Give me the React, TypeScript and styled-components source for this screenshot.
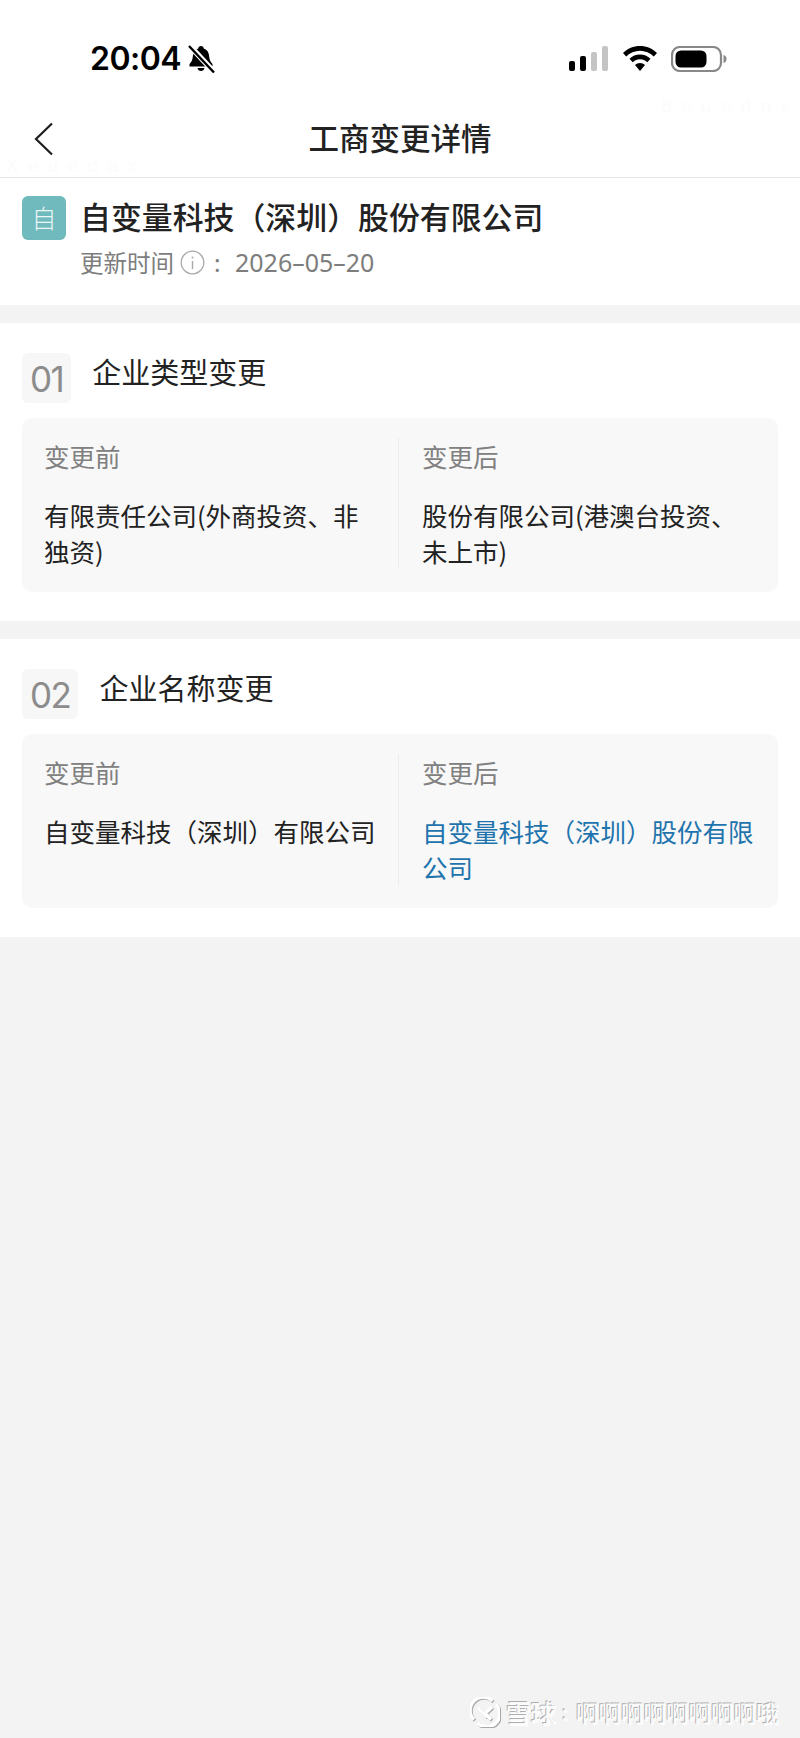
import styled, { createGlobalStyle } from "styled-components";

const GlobalStyle = createGlobalStyle`
    html, body {
        margin: 0;
        padding: 0;
        background: #f3f3f3;
    }
    * {
        box-sizing: border-box;
    }
`

const sections = [
    {
        no: "01",
        title: "企业类型变更",
        before: "有限责任公司(外商投资、非独资)",
        after: "股份有限公司(港澳台投资、未上市)",
    },
    {
        no: "02",
        title: "企业名称变更",
        before: "自变量科技（深圳）有限公司",
        after: "自变量科技（深圳）股份有限公司",
        changed: true,
    },
]

const App = () => {
    return (
        <Page>
            <GlobalStyle />
            <StatusBar>
                <TimeGroup>
                    <Time>20:04</Time>
                    <svg width="28" height="28" viewBox="0 0 28 28">
                        <path d="M14 1c1.600 0 2.600 1.100 2.800 2.400 3.400 1.100 5 4 5.300 7.400.3 3.700 1.100 6 3.400 8.200v2.500H2.500V19c2.300-2.200 3.100-4.500 3.400-8.200.3-3.400 1.900-6.300 5.300-7.400C11.400 2.100 12.400 1 14 1z" fill="#000" />
                        <path d="M10.500 23h7c-.3 1.800-1.700 3-3.500 3s-3.200-1.200-3.500-3z" fill="#000" />
                        <path d="M2 0 27 27" stroke="#fff" strokeWidth="5.500" />
                        <path d="M2 1 27 27.500" stroke="#000" strokeWidth="2.400" />
                    </svg>
                </TimeGroup>
                <StatusIcons>
                    <svg width="40" height="26" viewBox="0 0 40 26">
                        <rect x="0" y="15" width="6" height="10" rx="2" fill="#000" />
                        <rect x="11" y="10" width="6" height="15" rx="2" fill="#000" />
                        <rect x="22" y="6" width="6" height="19" rx="2" fill="#c4c4c4" />
                        <rect x="33" y="0" width="6" height="25" rx="2" fill="#c4c4c4" />
                    </svg>
                    <svg width="36" height="26" viewBox="0 0 36 26">
                        <path d="M18 0C11.500 0 5.500 2.600 1 7l3.200 3.500C8 6.900 12.800 4.800 18 4.800s10 2.100 13.800 5.700L35 7C30.500 2.600 24.500 0 18 0z" fill="#000" />
                        <path d="M18 8.500c-4 0-7.700 1.600-10.500 4.200l3.200 3.500c2-1.800 4.500-2.900 7.300-2.900s5.300 1.100 7.300 2.900l3.200-3.500C25.700 10.100 22 8.500 18 8.500z" fill="#000" />
                        <path d="M18 17c-1.900 0-3.700.7-5 2l5 6 5-6c-1.300-1.300-3.100-2-5-2z" fill="#000" />
                    </svg>
                    <svg width="56" height="26" viewBox="0 0 56 26">
                        <rect x="1" y="1" width="49" height="24" rx="8" fill="none" stroke="#888" strokeWidth="2.200" />
                        <rect x="4.500" y="4.500" width="31" height="17" rx="5.500" fill="#000" />
                        <path d="M52.500 9c2 .5 3 2 3 4s-1 3.500-3 4z" fill="#888" />
                    </svg>
                </StatusIcons>
            </StatusBar>

            <NavBar>
                <BackButton aria-label="返回">
                    <svg width="20" height="34" viewBox="0 0 20 34">
                        <path d="M18 1.500 2 17l16 15.500" fill="none" stroke="#1e1e1e" strokeWidth="2.200" />
                    </svg>
                </BackButton>
                <NavTitle>工商变更详情</NavTitle>
                <FaintMark $right>8 e u e d a x</FaintMark>
                <FaintMark>X e u e d a x</FaintMark>
            </NavBar>

            <CompanyPanel>
                <CompanyRow>
                    <CompanyLogo>自</CompanyLogo>
                    <CompanyName>自变量科技（深圳）股份有限公司</CompanyName>
                </CompanyRow>
                <UpdateRow>
                    更新时间
                    <svg width="25" height="25" viewBox="0 0 25 25">
                        <circle cx="12.500" cy="12.500" r="11.300" fill="none" stroke="#a8a8a8" strokeWidth="1.300" />
                        <circle cx="12.500" cy="7.500" r="1" fill="#a8a8a8" />
                        <path d="M12.500 11v8" stroke="#a8a8a8" strokeWidth="1.400" />
                    </svg>
                    <Colon>:</Colon>
                    <UpdateDate>2026–05–20</UpdateDate>
                </UpdateRow>
            </CompanyPanel>

            {sections.map((s) => (
                <Section key={s.no}>
                    <SectionHead>
                        <NumberBadge>{s.no}</NumberBadge>
                        <SectionTitle>{s.title}</SectionTitle>
                    </SectionHead>
                    <ChangeCard>
                        <ChangeCol>
                            <ColLabel>变更前</ColLabel>
                            <ColValue>{s.before}</ColValue>
                        </ChangeCol>
                        <ChangeCol $after>
                            <ColLabel>变更后</ColLabel>
                            <ColValue $changed={s.changed}>{s.after}</ColValue>
                        </ChangeCol>
                    </ChangeCard>
                </Section>
            ))}

            <Watermark>
                <LogoMark width="30" height="30" viewBox="0 0 30 30">
                    <g fill="none" stroke="#fff" strokeWidth="3.200">
                        <path d="M22.500 4A13 13 0 0 0 4 22.500" />
                        <path d="M7.500 26A13 13 0 0 0 26 7.500" />
                        <path d="M8 11l9 9" />
                        <path d="M22 10l-7 6.500 6 6" />
                    </g>
                </LogoMark>
                <BrandText>雪球</BrandText>
                <BrandColon>:</BrandColon>
                <AuthorText>啊啊啊啊啊啊啊啊哦</AuthorText>
            </Watermark>
        </Page>
    );
};

export default App

const cjk = `"Noto Sans CJK SC", "Noto Sans", sans-serif`

const Page = styled.div`
    position: relative;
    width: 800px;
    height: 1738px;
    overflow: hidden;
    background: #f3f3f3;
    font-family: ${cjk};
`

const StatusBar = styled.div`
    height: 87px;
    padding: 39px 73px 0 90px;
    background: #fff;
    display: flex;
    justify-content: space-between;
    align-items: flex-start;
`

const TimeGroup = styled.div`
    display: flex;
    align-items: center;
    gap: 6px;
`

const Time = styled.span`
    font-family: Inter, sans-serif;
    font-weight: 600;
    font-size: 32px;
    line-height: 40px;
    color: #000;
    letter-spacing: -0.5px;
`

const StatusIcons = styled.div`
    display: flex;
    align-items: center;
    gap: 13px;
    height: 40px;
`

const NavBar = styled.div`
    position: relative;
    height: 91px;
    background: #fff;
    border-bottom: 1px solid #e4e4e4;
    display: flex;
    align-items: center;
    justify-content: center;
`

const BackButton = styled.div`
    position: absolute;
    left: 34px;
    top: 35px;
    line-height: 0;
`

const NavTitle = styled.h1`
    margin: 10px 0 0;
    font-size: 30.500px;
    line-height: 40px;
    font-weight: 500;
    color: #222;
`

const FaintMark = styled.span<{ $right?: boolean }>`
    position: absolute;
    top: ${(p) => (p.$right ? "8px" : "68px")};
    ${(p) => (p.$right ? "right: 8px;" : "left: 6px;")}
    font-family: "Liberation Sans", sans-serif;
    font-size: 19px;
    letter-spacing: 2px;
    color: #fcfcfc;
`

const CompanyPanel = styled.div`
    height: 127px;
    padding: 18px 22px 0;
    background: #fff;
`

const CompanyRow = styled.div`
    display: flex;
    align-items: center;
    gap: 14px;
`

const CompanyLogo = styled.div`
    width: 44px;
    height: 44px;
    border-radius: 6px;
    background: #70b9bc;
    color: #e9f6f6;
    font-size: 25px;
    font-weight: 300;
    line-height: 43px;
    text-align: center;
`

const CompanyName = styled.div`
    padding-bottom: 4px;
    font-size: 30.900px;
    line-height: 40px;
    font-weight: 500;
    color: #222;
    white-space: nowrap;
`

const UpdateRow = styled.div`
    margin: 7px 0 0 58px;
    display: flex;
    align-items: center;
    font-size: 23.500px;
    line-height: 30px;
    color: #7d7d7d;

    svg {
        margin-left: 6px;
    }
`

const Colon = styled.span`
    margin-left: 9px;
    width: 21px;
`

const UpdateDate = styled.span`
    font-family: "Noto Sans", sans-serif;
    font-size: 25px;
    color: #7d7d7d;
`

const Section = styled.section`
    margin-top: 18px;
    padding: 30px 22px 29px;
    background: #fff;
`

const SectionHead = styled.div`
    display: flex;
    align-items: flex-start;
    gap: 21px;
`

const NumberBadge = styled.div`
    height: 50px;
    padding: 0 8px;
    border-radius: 6px;
    background: #f7f7f7;
    color: #8c8c8c;
    font-family: Inter, sans-serif;
    font-weight: 400;
    font-size: 35px;
    line-height: 52px;
    letter-spacing: -1.500px;
`

const SectionTitle = styled.h2`
    margin: -2px 0 0;
    font-size: 29px;
    line-height: 40px;
    font-weight: 400;
    color: #222;
`

const ChangeCard = styled.div`
    margin-top: 15px;
    padding: 20px 0 23px;
    border-radius: 10px;
    background: #f8f8f8;
    display: grid;
    grid-template-columns: 376px 1fr;
`

const ChangeCol = styled.div<{ $after?: boolean }>`
    padding: 0 22px;
    ${(p) => p.$after && "border-left: 1px solid #ececec; padding: 0 24px 0 23px;"}
`

const ColLabel = styled.div`
    font-size: 25.500px;
    line-height: 36px;
    color: #808080;
`

const ColValue = styled.div<{ $changed?: boolean }>`
    margin-top: 23px;
    font-size: 25.500px;
    line-height: 36px;
    color: ${(p) => (p.$changed ? "#1f74ad" : "#222")};
`

const Watermark = styled.div`
    position: absolute;
    left: 470px;
    top: 1697px;
    display: flex;
    align-items: center;
    gap: 6px;
    white-space: nowrap;
    color: #fafafa;
    text-shadow: -1px -1px 0 #aeaeae, 1px 1px 0 #fff;
`

const LogoMark = styled.svg`
    filter: drop-shadow(1px 1px 0 #a8a8a8);
`

const BrandText = styled.span`
    font-size: 25px;
    line-height: 30px;
    font-weight: 500;
`

const BrandColon = styled.span`
    font-size: 20px;
    line-height: 30px;
    width: 8px;
`

const AuthorText = styled.span`
    font-size: 22.500px;
    line-height: 30px;
`
